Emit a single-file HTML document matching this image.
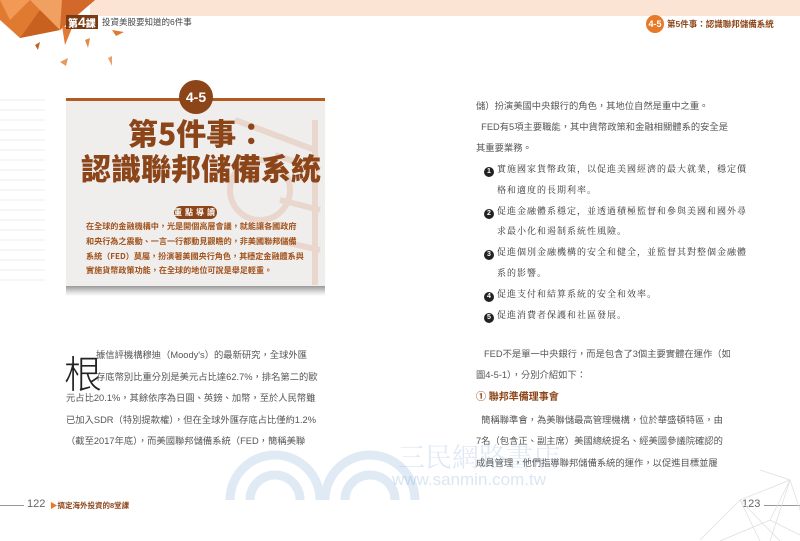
<!DOCTYPE html>
<html><head><meta charset="utf-8"><style>
*{margin:0;padding:0;box-sizing:border-box}
body{width:800px;height:541px;background:#fff;position:relative;overflow:hidden;font-family:"Liberation Sans","Noto Sans CJK TC",sans-serif;color:#444}
.a{position:absolute;white-space:nowrap}
.band{position:absolute;left:90px;top:0;width:710px;height:16px;background:#fbe4d4}
.box{position:absolute;left:66px;top:98px;width:259px;height:192px;background:#efeeed;border-top:3px solid #b35a1f}
.shadow{position:absolute;left:66px;top:286px;width:259px;height:10px;background:linear-gradient(#999,#ddd 60%,#fff)}
.title{font-family:"Noto Sans CJK TC",sans-serif;font-weight:900;color:#8c4518;font-size:30px}
.lead{font-family:"Noto Sans CJK TC",sans-serif;font-weight:700;color:#a2521c;font-size:8.1px;line-height:14.8px}
.body{font-size:9.3px;color:#555;font-family:"Liberation Sans","Noto Sans CJK TC",sans-serif}
.li{font-size:9px;color:#333;font-family:"Liberation Serif","Noto Serif CJK SC",serif;letter-spacing:1px}
.num{display:inline-block;width:10px;height:10px;border-radius:50%;background:#222;color:#fff;font-size:7px;text-align:center;line-height:10px;font-weight:bold;margin-right:3px;vertical-align:-1px;letter-spacing:0;font-family:"Liberation Sans",sans-serif}
</style></head><body>
<div class="band"></div>
<svg class="a" style="left:0;top:0" width="130" height="70" viewBox="0 0 130 70">
<polygon points="0,0 95,0 60,30 20,38 0,20" fill="#e07a30"/>
<polygon points="0,0 30,0 10,20" fill="#f29a55"/>
<polygon points="20,38 60,30 40,10" fill="#c8601f"/>
<polygon points="30,0 60,30 62,0" fill="#f0a060"/>
<polygon points="60,30 95,0 62,0" fill="#d2692a"/>
<polygon points="62,26 72,28 65,45" fill="#e27a33"/>
<polygon points="35,45 40,42 38,50" fill="#c8601f"/>
<polygon points="85,40 90,38 88,48" fill="#e58a45"/>
<polygon points="60,62 68,58 66,66" fill="#e69a60"/>
<polygon points="108,58 112,56 112,66" fill="#eaa070"/>
<polygon points="112,30 124,32 116,36" fill="#e07a30"/>
</svg>
<div class="a" style="left:66px;top:15px;font-size:10px;font-weight:900;color:#fff;background:#7a3a12;padding:0 2px;height:14px;line-height:14px">第<span style="font-size:14px">4</span>課</div>
<div class="a" style="left:102px;top:16px;font-size:8.5px;color:#444">投資美股要知道的6件事</div>

<div class="a" style="left:646px;top:15px;width:18px;height:18px;border-radius:50%;background:#e67a28;color:#fff;font-size:9px;font-weight:bold;text-align:center;line-height:18px">4-5</div>
<div class="a" style="left:667px;top:18px;font-size:8.5px;font-weight:bold;color:#8c4518">第5件事：認識聯邦儲備系統</div>

<svg class="a" style="left:0;top:95px" width="50" height="200"><g stroke="#eee" stroke-width="1">
<line x1="0" y1="5" x2="45" y2="5"/><line x1="0" y1="15" x2="45" y2="15"/><line x1="0" y1="25" x2="45" y2="25"/><line x1="0" y1="35" x2="45" y2="35"/><line x1="0" y1="45" x2="45" y2="45"/><line x1="0" y1="55" x2="45" y2="55"/><line x1="0" y1="65" x2="45" y2="65"/><line x1="0" y1="75" x2="45" y2="75"/><line x1="0" y1="85" x2="45" y2="85"/><line x1="0" y1="95" x2="45" y2="95"/><line x1="0" y1="105" x2="45" y2="105"/><line x1="0" y1="115" x2="45" y2="115"/><line x1="0" y1="125" x2="45" y2="125"/><line x1="0" y1="135" x2="45" y2="135"/><line x1="0" y1="145" x2="45" y2="145"/><line x1="0" y1="155" x2="45" y2="155"/><line x1="0" y1="165" x2="45" y2="165"/><line x1="0" y1="175" x2="45" y2="175"/><line x1="0" y1="185" x2="45" y2="185"/></g></svg>
<div class="box"></div>
<svg class="a" style="left:215px;top:110px" width="110" height="175"><g stroke="#e9d6cc" stroke-width="6" fill="none"><circle cx="45" cy="80" r="30"/><line x1="20" y1="10" x2="100" y2="40"/><line x1="60" y1="45" x2="105" y2="60"/><line x1="65" y1="90" x2="105" y2="100"/><line x1="60" y1="130" x2="105" y2="140"/><line x1="100" y1="10" x2="100" y2="175"/></g></svg>
<div class="shadow"></div>
<div class="a" style="left:179px;top:80px;width:34px;height:34px;border-radius:50%;background:#8c4518;color:#fff;font-size:14px;font-weight:900;text-align:center;line-height:34px">4-5</div>
<div class="a title" style="left:128px;top:110px">第5件事：</div>
<div class="a title" style="left:81px;top:145px">認識聯邦儲備系統</div>
<div class="a" style="left:174px;top:206px;width:43px;height:13px;border-radius:7px;background:#8c4518;color:#fff;font-size:8px;font-weight:bold;text-align:center;line-height:13px;letter-spacing:3px">重點導讀</div>
<div class="a lead" style="left:86px;top:220px">在全球的金融機構中，光是開個高層會議，就能讓各國政府<br>和央行為之震動、一言一行都動見觀瞻的，非美國聯邦儲備<br>系統（FED）莫屬，扮演著美國央行角色，其穩定金融體系與<br>實施貨幣政策功能，在全球的地位可說是舉足輕重。</div>

<div class="a" style="left:64px;top:352px;font-size:38px;line-height:40px;color:#222;font-family:'Noto Sans CJK TC',sans-serif;font-weight:300">根</div>
<div class="a body" style="left:96px;top:345px;line-height:21.5px">據信評機構穆迪（Moody's）的最新研究，全球外匯<br>存底幣別比重分別是美元占比達62.7%，排名第二的歐</div>
<div class="a body" style="left:66px;top:388px;line-height:21.5px">元占比20.1%，其餘依序為日圓、英鎊、加幣，至於人民幣雖<br>已加入SDR（特別提款權），但在全球外匯存底占比僅約1.2%<br>（截至2017年底），而美國聯邦儲備系統（FED，簡稱美聯</div>

<div class="a body" style="left:476px;top:96px;line-height:21px">儲）扮演美國中央銀行的角色，其地位自然是重中之重。<br>&nbsp;&nbsp;FED有5項主要職能，其中貨幣政策和金融相關體系的安全是<br>其重要業務。</div>
<div class="a li" style="left:484px;top:159px;line-height:20.8px"><span class="num">1</span>實施國家貨幣政策，以促進美國經濟的最大就業，穩定價<br>&nbsp;&nbsp;&nbsp;&nbsp;格和適度的長期利率。<br><span class="num">2</span>促進金融體系穩定，並透過積極監督和參與美國和國外尋<br>&nbsp;&nbsp;&nbsp;&nbsp;求最小化和遏制系統性風險。<br><span class="num">3</span>促進個別金融機構的安全和健全，並監督其對整個金融體<br>&nbsp;&nbsp;&nbsp;&nbsp;系的影響。<br><span class="num">4</span>促進支付和結算系統的安全和效率。<br><span class="num">5</span>促進消費者保護和社區發展。</div>

<div class="a body" style="left:484px;top:346px">FED不是單一中央銀行，而是包含了3個主要實體在運作（如</div>
<div class="a body" style="left:476px;top:367px">圖4-5-1），分別介紹如下：</div>
<div class="a" style="left:476px;top:388px;font-size:10px;font-weight:bold;color:#8c4518">① 聯邦準備理事會</div>
<div class="a body" style="left:476px;top:410px;line-height:21.3px">&nbsp;&nbsp;簡稱聯準會，為美聯儲最高管理機構，位於華盛頓特區，由<br>7名（包含正、副主席）美國總統提名、經美國參議院確認的<br>成員管理，他們指導聯邦儲備系統的運作，以促進目標並履</div>

<svg class="a" style="left:225px;top:430px;opacity:.18" width="300" height="70"><g fill="none" stroke="#5a8fc8" stroke-width="9"><path d="M5,70 A45,45 0 0 1 95,70"/><path d="M25,70 A25,25 0 0 1 75,70"/><path d="M100,70 A45,45 0 0 1 190,70"/><path d="M120,70 A25,25 0 0 1 170,70"/></g></svg>
<div class="a" style="left:398px;top:436px;font-size:27px;color:#5a8fc8;opacity:.18;font-family:'Noto Serif CJK SC',serif">三民網路書店</div>
<div class="a" style="left:392px;top:470px;font-size:17px;color:#5a8fc8;opacity:.22">www.sanmin.com.tw</div>

<div class="a" style="left:0;top:505px;width:24px;height:1px;background:#999"></div>
<div class="a" style="left:27px;top:498px;font-size:11px;color:#666">122</div>
<div class="a" style="left:50px;top:500px;font-size:7.5px;color:#8c4518;font-weight:bold"><span style="color:#e67a28">▶</span>搞定海外投資的8堂課</div>
<div class="a" style="left:742px;top:498px;font-size:11px;color:#666">123</div>
<div class="a" style="left:764px;top:505px;width:36px;height:1px;background:#999"></div>
<svg class="a" style="left:640px;top:440px" width="160" height="101"><g stroke="#ddd" fill="none" stroke-width=".7"><path d="M60,100 L100,60 L150,40 L160,70 M100,60 L120,101 M100,60 L140,101 M150,40 L130,101 M80,101 L130,80 L160,95 M130,80 L150,40 M120,30 L150,40"/></g></svg>
</body></html>
